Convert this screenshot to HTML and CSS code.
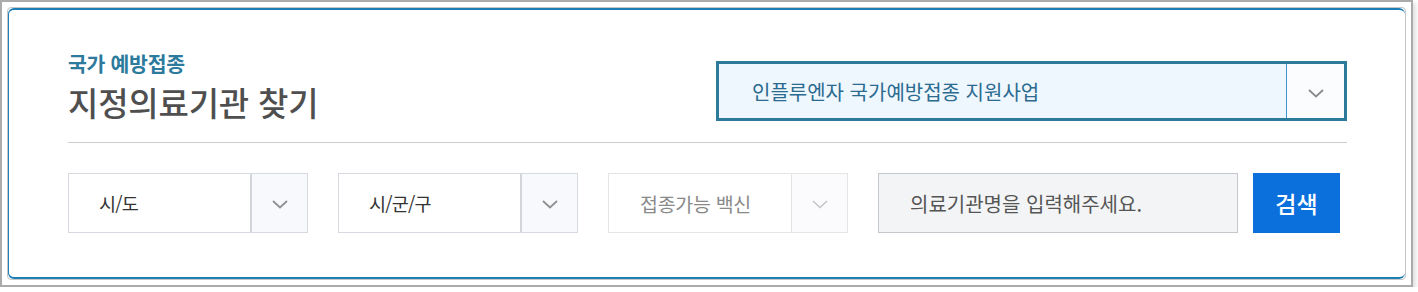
FILE: index.html
```html
<!DOCTYPE html>
<html lang="ko">
<head>
<meta charset="utf-8">
<title>지정의료기관 찾기</title>
<link rel="stylesheet" href="styles.css">
</head>
<body>
<div class="frame">
  <div class="card">
    <div class="card-inner">
      <div class="header">
        <div class="titles">
          <p class="subtitle">국가 예방접종</p>
          <h1 class="title">지정의료기관 찾기</h1>
        </div>
        <div class="program-select">
          <span class="program-label">인플루엔자 국가예방접종 지원사업</span>
          <span class="program-arrow">
            <svg width="16" height="9" viewBox="0 0 16 9"><path d="M1 1l7 6.5L15 1" fill="none" stroke="#8a8a8a" stroke-width="1.8"/></svg>
          </span>
        </div>
      </div>
      <div class="rule"></div>
      <div class="search-row">
        <div class="select">
          <span class="select-label">시/도</span>
          <span class="select-arrow"><svg width="16" height="9" viewBox="0 0 16 9"><path d="M1 1l7 6.5L15 1" fill="none" stroke="#909090" stroke-width="1.8"/></svg></span>
        </div>
        <div class="select">
          <span class="select-label">시/군/구</span>
          <span class="select-arrow"><svg width="16" height="9" viewBox="0 0 16 9"><path d="M1 1l7 6.5L15 1" fill="none" stroke="#909090" stroke-width="1.8"/></svg></span>
        </div>
        <div class="select select-disabled">
          <span class="select-label">접종가능 백신</span>
          <span class="select-arrow"><svg width="16" height="9" viewBox="0 0 16 9"><path d="M1 1l7 6.5L15 1" fill="none" stroke="#c4c4c4" stroke-width="1.6"/></svg></span>
        </div>
        <div class="name-input">의료기관명을 입력해주세요.</div>
        <button class="search-btn" type="button">검색</button>
      </div>
    </div>
  </div>
</div>
</body>
</html>
```

FILE: styles.css
```css
* { box-sizing: border-box; }
html, body { margin: 0; padding: 0; background: #ffffff; }
body {
  font-family: "Noto Sans CJK KR", "Noto Sans", sans-serif;
  color: #333;
}
.frame {
  width: 1413px;
  height: 287px;
  border: 2px solid #ababab;
  padding: 5px;
  background: #fff;
  box-shadow: 3px 3px 4px rgba(0, 0, 0, 0.12);
}
.card {
  height: 100%;
  border: 1px solid #c6c6c6;
  border-radius: 4px;
}
.card-inner {
  height: 100%;
  border-top: 2px solid #1d7fb6;
  border-bottom: 2px solid #1d7fb6;
  border-left: 1px solid #1d7fb6;
  border-radius: 6px;
  padding: 38px 58px 0 59px;
}
.header {
  display: flex;
  justify-content: space-between;
  align-items: flex-start;
  height: 78px;
}
.subtitle {
  margin: 0;
  font-size: 20.5px;
  line-height: 30px;
  font-weight: 600;
  color: #2c7a9c;
  letter-spacing: -0.3px;
}
.title {
  margin: 0;
  font-size: 33px;
  line-height: 48px;
  font-weight: 500;
  color: #4f4f4f;
  letter-spacing: -0.2px;
}
.program-select {
  margin-top: 13px;
  width: 631px;
  height: 60px;
  border: 3px solid #2c7b9b;
  background: #eef6fe;
  display: flex;
  align-items: stretch;
}
.program-label {
  flex: 1;
  display: flex;
  align-items: center;
  padding-left: 33px;
  font-size: 20px;
  color: #2b6b90;
  letter-spacing: 0;
  border-right: 1px solid #3d92d0;
}
.program-arrow {
  width: 57px;
  background: #fbfcfe;
  display: flex;
  align-items: center;
  justify-content: center;
  padding-top: 4px;
}
.rule {
  margin-top: 16px;
  height: 1px;
  background: #cdcdcd;
  width: 1279px;
}
.search-row {
  margin-top: 30px;
  display: flex;
  height: 60px;
}
.select {
  width: 240px;
  height: 60px;
  border: 1px solid #d6d9df;
  margin-right: 30px;
  display: flex;
  background: #fff;
}
.select-label {
  flex: 1;
  display: flex;
  align-items: center;
  padding-left: 30px;
  font-size: 18.5px;
  color: #333;
  letter-spacing: -0.8px;
  border-right: 2px solid #d3d5da;
}
.select-arrow {
  width: 55px;
  display: flex;
  align-items: center;
  justify-content: center;
  background: #f8f9fc;
  padding-top: 2px;
}
.select-disabled { border-color: #e4e5e7; }
.select-disabled .select-label {
  color: #8a8a8a;
  font-size: 19.5px;
  letter-spacing: -0.3px;
  border-right: 1px solid #e2e3e6;
  padding-left: 31px;
}
.select-disabled .select-arrow { background: #fbfbfd; }
.name-input {
  width: 360px;
  height: 60px;
  border: 1px solid #c4c7cc;
  background: #f3f4f6;
  display: flex;
  align-items: center;
  padding-left: 31px;
  font-size: 20px;
  color: #555;
  letter-spacing: 0;
}
.search-btn {
  margin-left: 15px;
  width: 87px;
  height: 60px;
  border: 0;
  background: #0b70dc;
  color: #fff;
  font-family: "Noto Sans CJK KR", "Noto Sans", sans-serif;
  font-size: 23px;
  font-weight: 500;
  padding: 0;
}
```
